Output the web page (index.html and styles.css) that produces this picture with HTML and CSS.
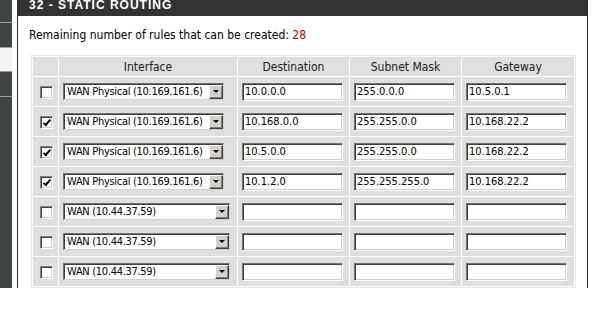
FILE: index.html
```html
<!DOCTYPE html>
<html lang="en">
<head>
  <meta charset="UTF-8">
  <title>Static Routing</title>
  <link rel="stylesheet" href="styles.css">
</head>
<body>
  <div class="page">
    <!-- Left menu (mostly scrolled off) -->
    <nav class="sidebar">
      <div class="nav-item first"></div>
      <div class="nav-item"></div>
      <div class="nav-item active"></div>
      <div class="nav-item"></div>
    </nav>

    <div class="panel">
      <h1 class="panel-title">32 - Static Routing</h1>
      <div class="panel-body">
        <p class="remaining">Remaining number of rules that can be created: <span class="count">28</span></p>

        <table class="rules">
          <colgroup>
            <col class="c-check"><col class="c-iface"><col class="c-addr"><col class="c-addr"><col class="c-gw">
          </colgroup>
          <thead>
            <tr>
              <th></th>
              <th>Interface</th>
              <th>Destination</th>
              <th>Subnet Mask</th>
              <th>Gateway</th>
            </tr>
          </thead>
          <tbody>
            <tr>
              <td class="center"><label class="check"><input type="checkbox"><span class="box"></span></label></td>
              <td><span class="combo"><select class="iface-phys"><option>WAN Physical (10.169.161.6)</option></select></span></td>
              <td><input type="text" class="field" value="10.0.0.0"></td>
              <td><input type="text" class="field" value="255.0.0.0"></td>
              <td><input type="text" class="field" value="10.5.0.1"></td>
            </tr>
            <tr>
              <td class="center"><label class="check"><input type="checkbox" checked><span class="box"></span></label></td>
              <td><span class="combo"><select class="iface-phys"><option>WAN Physical (10.169.161.6)</option></select></span></td>
              <td><input type="text" class="field" value="10.168.0.0"></td>
              <td><input type="text" class="field" value="255.255.0.0"></td>
              <td><input type="text" class="field" value="10.168.22.2"></td>
            </tr>
            <tr>
              <td class="center"><label class="check"><input type="checkbox" checked><span class="box"></span></label></td>
              <td><span class="combo"><select class="iface-phys"><option>WAN Physical (10.169.161.6)</option></select></span></td>
              <td><input type="text" class="field" value="10.5.0.0"></td>
              <td><input type="text" class="field" value="255.255.0.0"></td>
              <td><input type="text" class="field" value="10.168.22.2"></td>
            </tr>
            <tr>
              <td class="center"><label class="check"><input type="checkbox" checked><span class="box"></span></label></td>
              <td><span class="combo"><select class="iface-phys"><option>WAN Physical (10.169.161.6)</option></select></span></td>
              <td><input type="text" class="field" value="10.1.2.0"></td>
              <td><input type="text" class="field" value="255.255.255.0"></td>
              <td><input type="text" class="field" value="10.168.22.2"></td>
            </tr>
            <tr>
              <td class="center"><label class="check"><input type="checkbox"><span class="box"></span></label></td>
              <td><span class="combo"><select class="iface-wan"><option>WAN (10.44.37.59)</option></select></span></td>
              <td><input type="text" class="field"></td>
              <td><input type="text" class="field"></td>
              <td><input type="text" class="field"></td>
            </tr>
            <tr>
              <td class="center"><label class="check"><input type="checkbox"><span class="box"></span></label></td>
              <td><span class="combo"><select class="iface-wan"><option>WAN (10.44.37.59)</option></select></span></td>
              <td><input type="text" class="field"></td>
              <td><input type="text" class="field"></td>
              <td><input type="text" class="field"></td>
            </tr>
            <tr>
              <td class="center"><label class="check"><input type="checkbox"><span class="box"></span></label></td>
              <td><span class="combo"><select class="iface-wan"><option>WAN (10.44.37.59)</option></select></span></td>
              <td><input type="text" class="field"></td>
              <td><input type="text" class="field"></td>
              <td><input type="text" class="field"></td>
            </tr>
          </tbody>
        </table>
      </div>
    </div>
  </div>
</body>
</html>
```

FILE: styles.css
```css
body {
  margin: 0;
  background-color: #fff;
  font-family: "DejaVu Sans Condensed", "DejaVu Sans", sans-serif;
  font-stretch: condensed;
  font-size: 12px;
  color: #000;
}
.page {
  display: flex;
  gap: 5px;
  height: 293px;
  margin-top: -5px; /* page is scrolled a little */
}

/* sidebar */
.sidebar {
  width: 12px;
  background-color: #3f4343;
}
.nav-item {
  height: 24px;
  border-bottom: 1px solid #9a9c9c;
}
.nav-item.first {
  height: 27px;
}
.nav-item.active {
  height: 23px;
  background-color: #f2f2f2;
  border-top: 1px solid #9a9c9c;
  margin-top: -1px;
}

/* main panel */
.panel {
  width: 569px;
  border-left: 1px solid #2a2a2a;
  border-right: 1px solid #2a2a2a;
}
.panel-title {
  margin: 0;
  height: 21px;
  line-height: 20px;
  padding-left: 11px;
  background-color: #333;
  color: #fff;
  font-family: "Liberation Sans", Arial, sans-serif;
  font-size: 12px;
  font-weight: bold;
  letter-spacing: 1px;
  text-transform: uppercase;
}
.panel-body {
  padding: 0 11px 0 13px;
}
.remaining {
  margin: 0 0 0 -2px;
  padding: 12px 0;
  line-height: 15px;
}
.count {
  color: #c00000;
}

/* rules table */
.rules {
  width: 545px;
  table-layout: fixed;
  border: 1px solid #e6e6e6;
  border-spacing: 1px;
}
.c-check { width: 25px; }
.c-iface { width: 178px; }
.c-addr { width: 111px; }
.c-gw { width: 112px; }
.rules th {
  height: 19px;
  padding: 0;
  background-color: #dfdfdf;
  font-weight: normal;
  color: #222;
  text-align: center;
}
.rules td {
  height: 29px;
  padding: 0 0 0 4px;
  background-color: #dfdfdf;
  vertical-align: middle;
}
.rules td.center {
  padding: 0;
  text-align: center;
}

/* classic checkbox */
.check {
  display: inline-block;
  vertical-align: middle;
}
.check input {
  display: none;
}
.check .box {
  display: block;
  position: relative;
  width: 11px;
  height: 11px;
  background-color: #fff;
  border: 1px solid;
  border-color: #808080 #fff #fff #808080;
  box-shadow: inset 1px 1px 0 #404040, inset -1px -1px 0 #d4d0c8;
  margin-left: 1px;
}
.check input:checked + .box::after {
  content: "";
  position: absolute;
  left: 4px;
  top: 1px;
  width: 2px;
  height: 6px;
  border: solid #000;
  border-width: 0 2px 2px 0;
  transform: rotate(40deg);
}

/* text fields */
.field {
  box-sizing: border-box;
  width: 101px;
  height: 18px;
  margin: 0;
  padding: 0 0 0 2px;
  border: 1px solid;
  border-color: #707070 #fff #fff #707070;
  box-shadow: inset 1px 1px 0 #404040, inset -1px -1px 0 #d4d0c8;
  font-family: inherit;
  font-stretch: condensed;
  font-size: 11px;
  color: #000;
  vertical-align: middle;
}

/* drop-down */
.combo {
  display: inline-block;
  position: relative;
  vertical-align: middle;
}
.combo select {
  box-sizing: border-box;
  display: block;
  height: 17px;
  margin: 0;
  padding: 0 0 0 3px;
  appearance: none;
  background-color: #fff;
  border: 1px solid;
  border-color: #707070 #d4d0c8 #d4d0c8 #707070;
  box-shadow: inset 1px 1px 0 #404040;
  border-radius: 0;
  font-family: inherit;
  font-stretch: condensed;
  font-size: 11px;
  letter-spacing: -0.3px;
  color: #000;
}
.iface-phys { width: 161px; }
.iface-wan { width: 167px; }
.combo::after {
  content: "";
  position: absolute;
  right: 1px;
  top: 2px;
  width: 12px;
  height: 12px;
  background-color: #d4d0c8;
  border: 1px solid;
  border-color: #fff #404040 #404040 #fff;
  box-shadow: inset -1px -1px 0 #808080;
  pointer-events: none;
}
.combo::before {
  content: "";
  position: absolute;
  right: 5px;
  top: 7px;
  width: 0;
  height: 0;
  border-left: 3px solid transparent;
  border-right: 3px solid transparent;
  border-top: 3px solid #000;
  z-index: 1;
  pointer-events: none;
}
```
